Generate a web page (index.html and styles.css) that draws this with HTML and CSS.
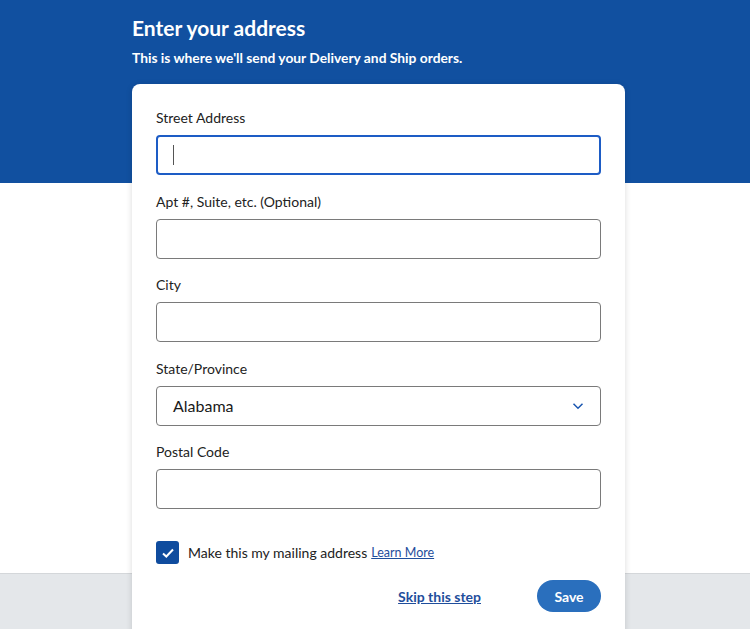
FILE: index.html
```html
<!DOCTYPE html>
<html lang="en">
<head>
<meta charset="UTF-8" />
<meta name="viewport" content="width=device-width, initial-scale=1" />
<title>Enter your address</title>
<link rel="stylesheet" href="styles.css">
</head>
<body>

<div class="page">
  <div class="wrap">
    <h1>Enter your address</h1>
    <p class="lead">This is where we'll send your Delivery and Ship orders.</p>

    <form class="card">
      <div class="field">
        <label>Street Address</label>
        <div class="input focus"><span class="caret"></span></div>
      </div>
      <div class="field">
        <label>Apt #, Suite, etc. (Optional)</label>
        <div class="input"></div>
      </div>
      <div class="field">
        <label>City</label>
        <div class="input"></div>
      </div>
      <div class="field">
        <label>State/Province</label>
        <div class="input select">
          <span>Alabama</span>
          <svg width="12" height="8" viewBox="0 0 12 8"><path d="M1.5 1.8 6 6.2l4.5-4.4" fill="none" stroke="#1a56b0" stroke-width="1.5"/></svg>
        </div>
      </div>
      <div class="field">
        <label>Postal Code</label>
        <div class="input"></div>
      </div>

      <div class="check-row">
        <span class="checkbox">
          <svg width="14" height="12" viewBox="0 0 14 12"><path d="M2 6.5 5.3 9.5 12 2.5" fill="none" stroke="#fff" stroke-width="2"/></svg>
        </span>
        <span>Make this my mailing address</span>
        <a href="#" class="learn">Learn More</a>
      </div>

      <div class="actions">
        <a href="#" class="skip">Skip this step</a>
        <button type="button" class="save">Save</button>
      </div>
    </form>
  </div>
</div>

</body>
</html>
```

FILE: styles.css
```css
body { margin: 0; padding: 0; font-family: Lato, "Noto Sans", Arial, sans-serif; color: #222; }
.page {
  min-height: 629px; overflow: hidden;
  background: linear-gradient(#1150a0 0 183px, #fff 183px 573px, #d4d7da 573px 574px, #e4e7ea 574px);
}
.wrap { width: 493px; margin-left: 132px; padding-top: 13px; }
h1 { margin: 0; color: #fff; font-size: 21px; line-height: 30px; font-weight: 700; }
.lead { margin: 5px 0 0; color: #fff; font-size: 13.8px; line-height: 20px; font-weight: 700; }

.card {
  margin-top: 16px; background: #fff; border-radius: 8px;
  padding: 24px 24px 30px; box-shadow: 0 1px 6px rgba(0,0,0,0.15);
}
.field { margin-bottom: 16.5px; }
.field label { display: block; font-size: 14px; line-height: 20px; margin-bottom: 7px; color: #222; }
.input {
  box-sizing: border-box; height: 40px; border: 1px solid #7a7a7a; border-radius: 4px;
  display: flex; align-items: center; padding: 0 16px;
}
.input.focus { border: 2px solid #1d5cc5; padding: 0 15px; }
.caret { width: 1px; height: 20px; background: #555; }
.select { justify-content: space-between; font-size: 16px; color: #1a1a1a; padding-right: 16px; }

.check-row { display: flex; align-items: center; margin-top: 32px; font-size: 14px; }
.checkbox {
  width: 23px; height: 23px; border-radius: 3px; background: #0f4c9e;
  display: flex; align-items: center; justify-content: center; margin-right: 9px;
}
.learn { color: #1f4e9c; font-size: 12.5px; margin-left: 4px; }

.actions { display: flex; justify-content: flex-end; align-items: center; margin-top: 16px; }
.skip { color: #1f4e9c; font-weight: 700; font-size: 14px; margin-right: 56px; }
.save {
  width: 64px; height: 32px; border: none; border-radius: 16px; background: #2a6fbd;
  color: #fff; font-family: inherit; font-weight: 700; font-size: 14px; cursor: pointer;
}
```
